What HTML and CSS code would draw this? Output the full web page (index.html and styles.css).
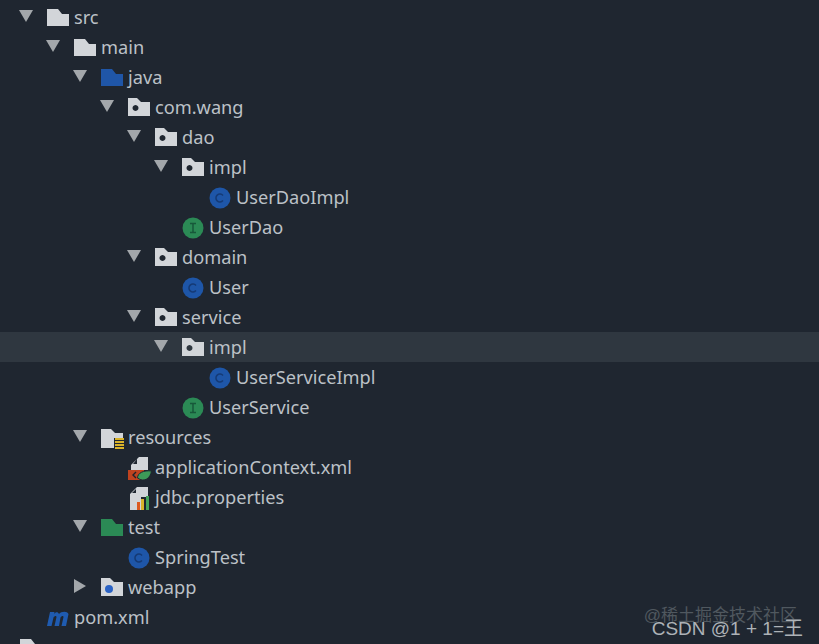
FILE: index.html
```html
<!DOCTYPE html>
<html lang="en">
<head>
  <meta charset="UTF-8">
  <meta name="viewport" content="width=device-width, initial-scale=1.0">
  <title>Project tree</title>
  <link rel="stylesheet" href="styles.css">
</head>
<body>
  <svg class="defs" width="0" height="0">
    <symbol id="open" viewBox="0 0 14 14"><path d="M0 1h14L7 13z"/></symbol>
    <symbol id="closed" viewBox="0 0 14 14"><path d="M1 0l12 7-12 7z"/></symbol>
    <symbol id="folder" viewBox="0 0 22 18"><path d="M0 1h11l4 5h7v12H0z"/></symbol>
    <symbol id="package" viewBox="0 0 22 18"><path fill-rule="evenodd" d="M0 0h9l4 4h9v14H0zM7.500 7a3 3 0 1 0 .01 0z"/></symbol>
    <symbol id="webapp" viewBox="0 0 22 18"><path fill="#d2d5d9" d="M0 0h9l4 4h9v14H0z"/><circle cx="8" cy="11" r="4" fill="#2a62c4"/></symbol>
    <symbol id="res" viewBox="0 0 24 22"><path fill="#d2d5d9" d="M0 1h10l4 4h8v5H13v10H0z"/><path fill="#d9b32a" d="M14 10h9v2h-9zM14 13h9v2h-9zM14 16h9v2h-9zM14 19h9v2h-9z"/></symbol>
    <symbol id="cls" viewBox="0 0 22 22"><circle cx="11" cy="11" r="10.500" fill="#1e56a8"/><path d="M14 8.400a4 4 0 1 0 0 5.200" fill="none" stroke="#153a75" stroke-width="1.500"/></symbol>
    <symbol id="ifc" viewBox="0 0 22 22"><circle cx="11" cy="11" r="10.500" fill="#2b8a55"/><path d="M8 6.500h6M8 15.500h6M11 6.500v9" fill="none" stroke="#17583a" stroke-width="1.500"/></symbol>
    <symbol id="xml" viewBox="0 0 24 24"><path fill="#d2d5d9" d="M11 0h9v13H3V8zM9 2L5 7h4z"/><path fill="#c0431f" d="M0 13h16v10H0z"/><path d="M8 15l-3 3 3 3" fill="none" stroke="#1d232c" stroke-width="1.400"/><path fill="#3d9a58" stroke="#1f2731" d="M9.500 21c0-5 6-8 14-7-1 7-7 12-14 7z"/></symbol>
    <symbol id="props" viewBox="0 0 22 24"><path fill="#d2d5d9" d="M8 0h11v10h-7v13H1V7zM7 2L3 6h4z"/><path fill="#dc5a20" d="M8 15h3v8H8z"/><path fill="#d9b32a" d="M12 12h3v11h-3z"/><path fill="#45a35b" d="M17 9h3v14h-3z"/></symbol>
    <symbol id="maven" viewBox="0 0 22 18"><path fill="#1f5bb0" d="M0 18L3 4h4.500l-.4 2C8.500 3.500 11 3.500 12 6c2-2.500 8-3.500 9.500 0L19 18h-4.500l2-9c0-1.500-2-1-3 .5L12 18H7.500l2-9C9.500 7.500 7.500 8 6.500 9.500L4.500 18z"/></symbol>
  </svg>

  <ul class="tree">
    <li class="row d0"><svg class="arrow"><use href="#open"/></svg><svg class="icon folder"><use href="#folder"/></svg><span>src</span></li>
    <li class="row d1"><svg class="arrow"><use href="#open"/></svg><svg class="icon folder"><use href="#folder"/></svg><span>main</span></li>
    <li class="row d2"><svg class="arrow"><use href="#open"/></svg><svg class="icon folder blue"><use href="#folder"/></svg><span>java</span></li>
    <li class="row d3"><svg class="arrow"><use href="#open"/></svg><svg class="icon folder"><use href="#package"/></svg><span>com.wang</span></li>
    <li class="row d4"><svg class="arrow"><use href="#open"/></svg><svg class="icon folder"><use href="#package"/></svg><span>dao</span></li>
    <li class="row d5"><svg class="arrow"><use href="#open"/></svg><svg class="icon folder"><use href="#package"/></svg><span>impl</span></li>
    <li class="row d6 leaf"><svg class="icon round"><use href="#cls"/></svg><span>UserDaoImpl</span></li>
    <li class="row d5 leaf"><svg class="icon round"><use href="#ifc"/></svg><span>UserDao</span></li>
    <li class="row d4"><svg class="arrow"><use href="#open"/></svg><svg class="icon folder"><use href="#package"/></svg><span>domain</span></li>
    <li class="row d5 leaf"><svg class="icon round"><use href="#cls"/></svg><span>User</span></li>
    <li class="row d4"><svg class="arrow"><use href="#open"/></svg><svg class="icon folder"><use href="#package"/></svg><span>service</span></li>
    <li class="row d5 selected"><svg class="arrow"><use href="#open"/></svg><svg class="icon folder"><use href="#package"/></svg><span>impl</span></li>
    <li class="row d6 leaf"><svg class="icon round"><use href="#cls"/></svg><span>UserServiceImpl</span></li>
    <li class="row d5 leaf"><svg class="icon round"><use href="#ifc"/></svg><span>UserService</span></li>
    <li class="row d2"><svg class="arrow"><use href="#open"/></svg><svg class="icon file"><use href="#res"/></svg><span>resources</span></li>
    <li class="row d3 leaf"><svg class="icon file"><use href="#xml"/></svg><span>applicationContext.xml</span></li>
    <li class="row d3 leaf"><svg class="icon file"><use href="#props"/></svg><span>jdbc.properties</span></li>
    <li class="row d2"><svg class="arrow"><use href="#open"/></svg><svg class="icon folder green"><use href="#folder"/></svg><span>test</span></li>
    <li class="row d3 leaf"><svg class="icon round"><use href="#cls"/></svg><span>SpringTest</span></li>
    <li class="row d2"><svg class="arrow"><use href="#closed"/></svg><svg class="icon folder"><use href="#webapp"/></svg><span>webapp</span></li>
    <li class="row d0 leaf"><svg class="icon folder"><use href="#maven"/></svg><span>pom.xml</span></li>
    <li class="row next"><svg class="icon folder"><use href="#folder"/></svg></li>
  </ul>

  <div class="mark">
    <div class="mark-juejin">@稀土掘金技术社区</div>
    <div class="mark-csdn">CSDN @1 + 1=王</div>
  </div>
</body>
</html>
```

FILE: styles.css
```css
html, body {
  height: 100%;
}

body {
  margin: 0;
  background: #1f2630;
  color: #bcc1c7;
  font-family: 'Noto Sans', sans-serif;
  font-size: 18.2px;
  overflow: hidden;
  position: relative;
}

.defs {
  position: absolute;
}

.tree {
  list-style: none;
  margin: 0;
  padding: 2px 0 0;
}

.row {
  display: flex;
  align-items: center;
  height: 30px;
  white-space: nowrap;
}

.selected {
  background: #2f3740;
}

.d0 { padding-left: 19px; }
.d1 { padding-left: 46px; }
.d2 { padding-left: 73px; }
.d3 { padding-left: 100px; }
.d4 { padding-left: 127px; }
.d5 { padding-left: 154px; }
.d6 { padding-left: 181px; }

.leaf {
  margin-left: 28px;
}

.next {
  padding-left: 20px;
}

.arrow {
  width: 14px;
  height: 14px;
  margin-right: 14px;
  margin-top: -2px;
  fill: #a3a7ab;
}

.icon {
  flex: none;
}

.folder {
  width: 22px;
  height: 18px;
  margin-right: 5px;
  fill: #d2d5d9;
}

.blue {
  fill: #1f56a8;
}

.green {
  fill: #2b8a55;
}

.round {
  width: 22px;
  height: 22px;
  margin-right: 5px;
  margin-top: 2px;
}

.file {
  width: 24px;
  height: 24px;
  margin-right: 3px;
  margin-top: 4px;
}

.mark {
  position: absolute;
  right: 16px;
  bottom: 6px;
  text-align: right;
  font-family: 'Liberation Sans', 'Noto Sans CJK SC', sans-serif;
  line-height: 1;
}

.mark-juejin {
  font-size: 17px;
  color: #50585f;
  margin-bottom: -5px;
  margin-right: 6px;
}

.mark-csdn {
  font-size: 19px;
  color: #adb2b7;
}
```
